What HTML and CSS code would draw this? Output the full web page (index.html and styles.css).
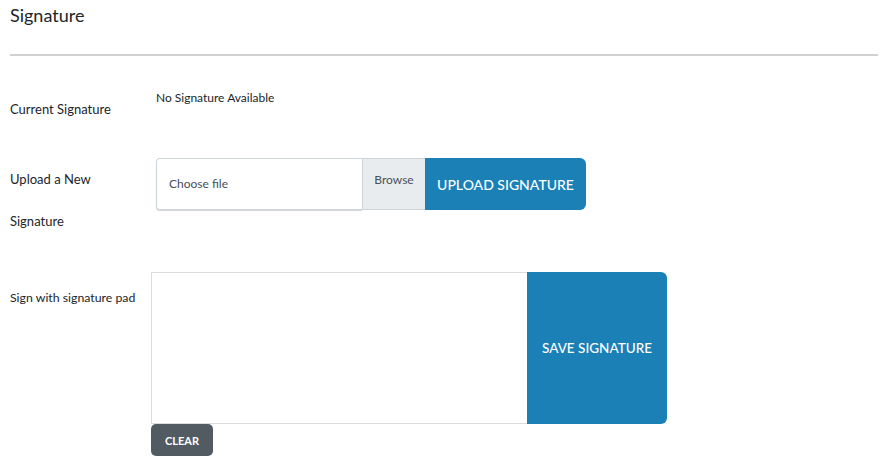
FILE: index.html
```html
<!DOCTYPE html>
<html>
<head>
<meta charset="utf-8">
<link rel="stylesheet" href="styles.css">
</head>
<body>
<div class="page">
  <h1 class="title">Signature</h1>
  <hr class="rule">
  <div class="row row-current">
    <div class="label label-tall">Current Signature</div>
    <div class="value">No Signature Available</div>
  </div>
  <div class="row row-upload">
    <div class="label label-tall">Upload a New Signature</div>
    <div class="input-group">
      <div class="file-input">Choose file</div>
      <div class="browse">Browse</div>
      <button class="btn btn-upload">UPLOAD SIGNATURE</button>
    </div>
  </div>
  <div class="row row-pad">
    <div class="label label-pad">Sign with signature pad</div>
    <div class="pad-wrap">
      <div class="pad-group">
        <div class="pad"></div>
        <button class="btn btn-save">SAVE SIGNATURE</button>
      </div>
      <button class="btn btn-clear">CLEAR</button>
    </div>
  </div>
</div>
</body>
</html>
```
FILE: styles.css
```css
* { box-sizing: border-box; }
body {
  margin: 0;
  font-family: "Lato", "Open Sans", sans-serif;
  color: #212529;
  background: #fff;
}
.page { padding: 0 16px 0 10px; }
.title {
  margin: 0;
  padding-top: 4px;
  font-size: 18px;
  font-weight: 400;
  line-height: 22px;
}
.rule {
  margin: 28px 0 0 0;
  border: 0;
  border-top: 2px solid #cfd1d3;
}
.row { display: flex; align-items: flex-start; }
.label { width: 146px; flex: none; font-size: 13px; }
.label-tall { line-height: 42px; width: 120px; margin-right: 26px; }
.row-current { margin-top: 32px; }
.value { font-size: 12px; line-height: 20px; padding-top: 0; }
.row-upload { margin-top: 28px; }
.input-group {
  display: flex;
  height: 52px;
  width: 430px;
}
.file-input {
  width: 206px;
  border: 1px solid #ced4da;
  border-right: 0;
  border-radius: 4px 0 0 4px;
  font-size: 12px;
  color: #495057;
  padding: 0 12px;
  line-height: 50px;
  box-shadow: 0 1px 1px #d4d4d4;
}
.browse {
  width: 63px;
  background: #e9ecef;
  border: 1px solid #ced4da;
  border-right: 0;
  font-size: 12px;
  color: #495057;
  text-align: center;
  line-height: 42px;
}
.btn {
  border: 0;
  font-family: inherit;
  color: #fff;
  cursor: pointer;
}
.btn-upload {
  width: 161px;
  background: #1a80b6;
  border-radius: 0 6px 6px 0;
  font-size: 14px;
  font-weight: 500;
}
.row-pad { margin-top: 30px; }
.label-pad { width: 141px; padding-top: 16px; line-height: 20px; font-size: 12.3px; }
.pad-group { display: flex; height: 152px; }
.pad {
  width: 376px;
  border: 1px solid #dcdcdc;
  border-right: 0;
}
.btn-save {
  width: 140px;
  background: #1a80b6;
  border-radius: 0 6px 6px 0;
  font-size: 13.5px;
  font-weight: 500;
}
.btn-clear {
  display: block;
  width: 62px;
  height: 32px;
  background: #535b62;
  border-radius: 5px;
  font-size: 11px;
  font-weight: 700;
}
```
